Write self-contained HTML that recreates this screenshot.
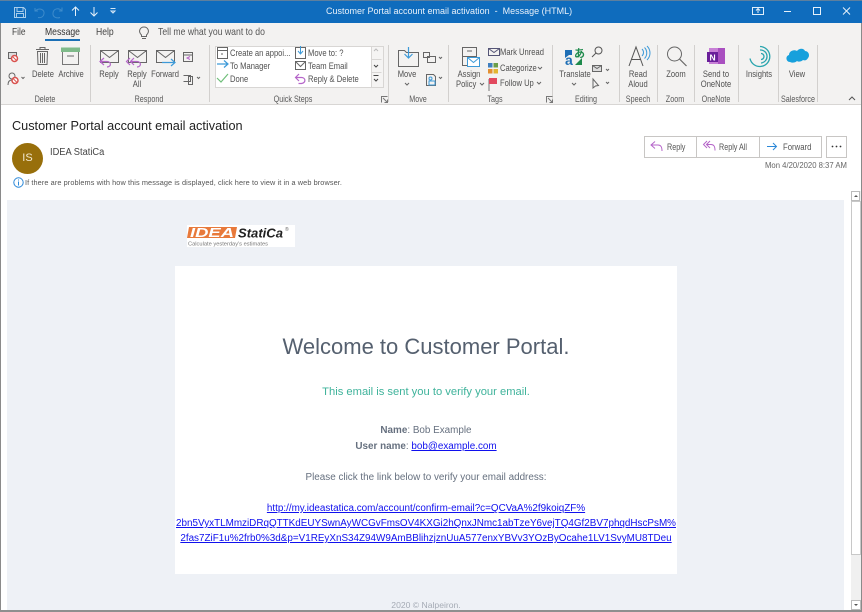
<!DOCTYPE html>
<html><head><meta charset="utf-8"><style>
html,body{margin:0;padding:0}
body{width:862px;height:612px;position:relative;overflow:hidden;background:#fff;font-family:"Liberation Sans",sans-serif;color:#444}
.a{position:absolute}
.t{position:absolute;white-space:nowrap;font-size:9.500px;line-height:11px;color:#505050;transform-origin:left center;transform:scaleX(.8)}
.c{text-align:center;transform-origin:left center;transform:scaleX(.8) translateX(-50%)}
.sep{position:absolute;top:45px;width:1px;height:57px;background:#d2d0ce}
.g{position:absolute;top:94px;white-space:nowrap;font-size:9px;line-height:11px;color:#5a5a5a;transform-origin:left center;transform:scaleX(.8) translateX(-50%)}
svg{position:absolute;overflow:visible}
.m{position:absolute;white-space:nowrap;font-family:"Liberation Sans",sans-serif;text-align:center;left:175px;width:502px;color:#66707f}
a{color:#1010ee;text-decoration:underline}
</style></head><body>
<!-- title bar -->
<div class="a" style="left:0;top:0;width:862px;height:23px;background:#0f6cbd"></div>
<div class="a" style="left:0;top:0;width:862px;height:1px;background:#5d7f9e"></div>
<svg style="left:0;top:0" width="862" height="23" fill="none" stroke="#cfe3f5" stroke-width="1">
<path d="M14.500 7.500h9l2 2v8h-11zM17 7.500v4h6v-4M16.500 17.500v-4h7v4" stroke="#a8cdeb"/>
<path d="M35 8v3h3M35.500 10.500c4-3 9-1 8.500 3s-4 4.500-6 4" stroke="#3d8bcb"/>
<path d="M62 7.500v3.500h-3M61.500 10.500c-3-3-8-2-8.500 2.500s4 5.500 7 4.500" stroke="#3d8bcb"/>
<path d="M75.500 16V7M72 10.500l3.500-3.500 3.500 3.500M94 7v9M90.500 12.500l3.500 3.500 3.500-3.500" stroke="#e6f1fa"/>
<path d="M110.500 8.500h5M111 11h4l-2 2z" stroke="#d5e7f6"/>
<path d="M752.500 7.500h11v7h-11zM758 13v-4M756 10.500l2-2 2 2" stroke="#e0eefa"/>
<path d="M784 11.500h7" stroke="#e6f1fa"/>
<rect x="813.500" y="7.500" width="7" height="7" stroke="#e6f1fa"/>
<path d="M843 7.500l7 7M850 7.500l-7 7" stroke="#e6f1fa"/>
</svg>
<div class="t" style="left:326px;top:6px;color:#e8f1fa;font-size:9px;transform:none">Customer Portal account email activation &nbsp;-&nbsp; Message (HTML)</div>
<!-- ribbon -->
<div class="a" style="left:0;top:23px;width:862px;height:82px;background:#f3f2f1"></div>
<div class="a" style="left:0;top:104px;width:862px;height:1px;background:#d8d6d4"></div>
<div class="t" style="left:12px;top:27px;font-size:10.500px;color:#444">File</div>
<div class="t" style="left:45px;top:27px;font-size:10.500px;color:#333;transform:scaleX(.82)">Message</div>
<div class="a" style="left:45px;top:39px;width:35px;height:2px;background:#1a6fb5"></div>
<div class="t" style="left:96px;top:27px;font-size:10.500px;color:#444;transform:scaleX(.82)">Help</div>
<div class="t" style="left:158px;top:27px;font-size:10.500px;color:#555;transform:scaleX(.825)">Tell me what you want to do</div>
<svg style="left:138px;top:26px" width="12" height="14" fill="none" stroke="#666"><path d="M3.500 9c-4-4-1-8 2.500-8s6.500 4 2.500 8v1.500h-5zM4 12.500h4"/></svg>
<!-- separators -->
<div class="sep" style="left:90px"></div><div class="sep" style="left:209px"></div><div class="sep" style="left:388px"></div><div class="sep" style="left:448px"></div><div class="sep" style="left:552px"></div><div class="sep" style="left:619px"></div><div class="sep" style="left:657px"></div><div class="sep" style="left:694px"></div><div class="sep" style="left:738px"></div><div class="sep" style="left:778px"></div><div class="sep" style="left:817px"></div>
<!-- delete group icons -->
<svg style="left:0;top:44px" width="90" height="50" fill="none" stroke="#666">
<rect x="8.500" y="8.500" width="8" height="6" fill="#ddd"/><circle cx="14.500" cy="14.500" r="3" fill="#fff" stroke="#d9534f" stroke-width="1.500"/><path d="M12.500 12.500l4 4" stroke="#d9534f"/>
<circle cx="12" cy="32" r="3"/><path d="M8 41c0-4 2-5 4-5"/><circle cx="15" cy="36.500" r="3" fill="#fff" stroke="#d9534f" stroke-width="1.500"/><path d="M13 34.500l4 4" stroke="#d9534f"/><path d="M21.500 33l1.500 1.500 1.500-1.500"/>
<path d="M37.500 7.500h10l-.5 13h-9zM36 5.500h13M40 5V3.500h5V5M40.500 9v10M42.500 9v10M44.500 9v10"/>
<rect x="62.500" y="7.500" width="16" height="13" stroke="#777"/><rect x="61.500" y="4" width="18" height="3.500" fill="#7fba8a" stroke="#7fba8a"/><path d="M67 12h7"/>
</svg>
<div class="t c" style="left:42.500px;top:69px">Delete</div>
<div class="t c" style="left:70.500px;top:69px">Archive</div>
<div class="g" style="left:45px">Delete</div>
<!-- respond -->
<svg style="left:90px;top:45px" width="120" height="50" fill="none" stroke="#666">
<path d="M10.500 5.500h18v12h-18zM10.500 5.500l9 7 9-7M38.500 5.500h18v12h-18zM38.500 5.500l9 7 9-7M66.500 5.500h18v12h-18zM66.500 5.500l9 7 9-7"/>
<path d="M14 13l-4 3.500 4 3.500M10 16.500h7c4 0 5 5 0 5.500" stroke="#b565c9" stroke-width="1.200"/>
<path d="M40 13l-3.500 3.500 3.500 3.500M44 13l-3.500 3.500 3.500 3.500M41 16.500h6c4 0 5 5 0 5.500" stroke="#b565c9" stroke-width="1.200"/>
<path d="M72 17.500h13M81 14l4 3.500-4 3.500" stroke="#3d9ad8" stroke-width="1.200"/>
<path d="M93.500 7.500h9v9h-9zM93.500 10h9"/><path d="M100 11.500l-3 1.500 3 1.500" stroke="#b565c9"/>
<path d="M93.500 30.500h7v6h-7M98.500 31.500h4v8h-4z"/><path d="M107 32l1.500 1.500 1.500-1.500"/>
</svg>
<div class="t c" style="left:109px;top:69px">Reply</div>
<div class="t c" style="left:136.500px;top:69px">Reply</div>
<div class="t c" style="left:136.500px;top:79px">All</div>
<div class="t c" style="left:165px;top:69px">Forward</div>
<div class="g" style="left:149px">Respond</div>
<!-- quick steps -->
<div class="a" style="left:215px;top:46px;width:167px;height:40px;background:#fff;border:1px solid #d8d6d4"></div>
<div class="a" style="left:371px;top:47px;width:11px;height:40px;background:#f5f4f3;border-left:1px solid #d8d6d4"></div>
<svg style="left:210px;top:44px" width="175" height="46" fill="none" stroke="#666">
<path d="M7.500 3.500h10v11h-10zM7.500 6.500h10"/><path d="M11 10h2"/>
<path d="M7 20h11M14 16.500l4 3.500-4 3.500" stroke="#3d9ad8" stroke-width="1.200"/>
<path d="M7 34l4 4 7-8" stroke="#6fbf7a" stroke-width="1.200"/>
<path d="M85.500 3.500h10v11h-10z"/><path d="M90.500 2v8M88 7l2.500 3 2.500-3" stroke="#3d9ad8"/>
<path d="M85.500 17.500h10v8h-10zM85.500 17.500l5 5 5-5"/>
<path d="M89 30l-3.500 3.500 3.500 3.500M85.500 33.500h6c4 0 5 5 0 6h-3" stroke="#b565c9" stroke-width="1.200"/>
<path d="M164 7l2-2 2 2" stroke="#bbb"/><path d="M164 21l2 2 2-2" stroke="#444"/><path d="M163.500 31.500h5M164 35l2 2 2-2" stroke="#444"/>
<path d="M161.500 15.500h10M161.500 28.500h10" stroke="#d8d6d4"/>
</svg>
<div class="t" style="left:230px;top:48px">Create an appoi...</div>
<div class="t" style="left:230px;top:61px">To Manager</div>
<div class="t" style="left:230px;top:74px">Done</div>
<div class="t" style="left:308px;top:48px">Move to: ?</div>
<div class="t" style="left:308px;top:61px">Team Email</div>
<div class="t" style="left:308px;top:74px">Reply &amp; Delete</div>
<div class="g" style="left:293px">Quick Steps</div>
<svg style="left:380px;top:95px" width="9" height="9" fill="none" stroke="#777"><path d="M1.500 7.500v-6h6M3 3l4 4M7.500 4.500v3h-3"/></svg>
<!-- move -->
<svg style="left:388px;top:44px" width="60" height="50" fill="none" stroke="#666">
<path d="M10.500 6.500h6l2 2h12v14h-20z"/><path d="M20.500 3v11M16.500 10l4 4 4-4" stroke="#3d9ad8" stroke-width="1.200"/>
<path d="M35.500 8.500h6v5h-6zM39.500 12.500h8v6h-8zM51 13l1.500 1.500 1.500-1.500"/>
<path d="M38.500 30.500h7l2 2v9h-9z"/><path d="M41 37h6v4h-6z" stroke="#3d9ad8"/><circle cx="42.500" cy="34.500" r="1.500" stroke="#3d9ad8"/><path d="M51 33l1.500 1.500 1.500-1.500"/>
</svg>
<div class="t c" style="left:407px;top:69px">Move</div>
<svg style="left:404px;top:81px" width="6" height="6" fill="none" stroke="#666"><path d="M1 2l2 2 2-2"/></svg>
<div class="g" style="left:418px">Move</div>
<!-- tags -->
<svg style="left:448px;top:44px" width="105" height="50" fill="none" stroke="#666">
<path d="M14.500 3.500h14v9h-14zM14.500 12.500h14v9h-14zM19 7h5"/><rect x="19.500" y="13.500" width="12" height="9" fill="#fff" stroke="#3d9ad8"/><path d="M19.500 13.500l6 5 6-5" stroke="#3d9ad8"/>
<path d="M40.500 4.500h11v7h-11zM40.500 4.500l5.500 4 5.500-4" stroke="#557"/>
<rect x="40" y="19" width="4.500" height="4.500" fill="#3f7fbf" stroke="none"/><rect x="45.500" y="19" width="4.500" height="4.500" fill="#6b9e4a" stroke="none"/><rect x="40" y="25" width="4.500" height="4.500" fill="#e39032" stroke="none"/><rect x="45.500" y="25" width="4.500" height="4.500" fill="#e3b532" stroke="none"/>
<path d="M41 35v12" stroke="#777"/><path d="M41.500 34.500h7v5h-7z" fill="#e2495e" stroke="#e2495e"/>
</svg>
<div class="t c" style="left:469px;top:69px">Assign</div>
<div class="t" style="left:456px;top:79px">Policy</div>
<svg style="left:479px;top:81px" width="6" height="6" fill="none" stroke="#666"><path d="M1 2l2 2 2-2"/></svg>
<div class="t" style="left:500px;top:47px">Mark Unread</div>
<div class="t" style="left:500px;top:63px">Categorize</div>
<svg style="left:537px;top:65px" width="6" height="6" fill="none" stroke="#666"><path d="M1 2l2 2 2-2"/></svg>
<div class="t" style="left:500px;top:78px">Follow Up</div>
<svg style="left:536px;top:80px" width="6" height="6" fill="none" stroke="#666"><path d="M1 2l2 2 2-2"/></svg>
<div class="g" style="left:495px">Tags</div>
<svg style="left:545px;top:95px" width="9" height="9" fill="none" stroke="#777"><path d="M1.500 7.500v-6h6M3 3l4 4M7.500 4.500v3h-3"/></svg>
<!-- editing -->
<svg style="left:552px;top:44px" width="68" height="50" fill="none" stroke="#666">
<path d="M13 6h7v5l-3 0-4 3z" fill="#1f6fb5" stroke="none"/>
<text x="13" y="21" font-family="Liberation Sans" font-size="14" font-weight="bold" fill="#1f6fb5" stroke="none">a</text>
<text x="22" y="13" font-family="Noto Sans CJK JP" font-size="11" font-weight="bold" fill="#1e8a4c" stroke="none">あ</text>
<path d="M23 21l7-7v7z" fill="#1e8a4c" stroke="none"/>
<circle cx="46.500" cy="6.500" r="3.500" stroke="#555"/><path d="M44 9l-4 4" stroke="#555"/>
<path d="M40.500 21.500h9v6h-9z" fill="#ddd"/><path d="M40.500 21.500l4.500 3 4.500-3M54 25l1.500 1.500 1.500-1.500"/>
<path d="M41 35v9l2.500-2 3-0.500zM54 38l1.500 1.500 1.500-1.500"/>
</svg>
<div class="t c" style="left:575px;top:69px">Translate</div>
<svg style="left:571px;top:81px" width="6" height="6" fill="none" stroke="#666"><path d="M1 2l2 2 2-2"/></svg>
<div class="g" style="left:586px">Editing</div>
<!-- speech -->
<svg style="left:619px;top:44px" width="38" height="26" fill="none" stroke="#555">
<path d="M10 22L17 3l7 19M12.500 15.500h9"/><path d="M23 5c2 2 2 5 0 7M25.500 3.500c3 3 3 8 0 11M28 2c4 4 4 10 0 14" stroke="#3d9ad8"/>
</svg>
<div class="t c" style="left:638px;top:69px">Read</div>
<div class="t c" style="left:638px;top:79px">Aloud</div>
<div class="g" style="left:638px">Speech</div>
<!-- zoom -->
<svg style="left:657px;top:44px" width="38" height="26" fill="none" stroke="#666">
<circle cx="17.500" cy="10" r="7"/><path d="M22.500 15l7 7" stroke-width="1.200"/>
</svg>
<div class="t c" style="left:676px;top:69px">Zoom</div>
<div class="g" style="left:675px">Zoom</div>
<!-- onenote -->
<svg style="left:700px;top:47px" width="30" height="20">
<rect x="9" y="1" width="16" height="16" fill="#c77fd6"/><rect x="18" y="1" width="7" height="16" fill="#a94fc0"/><rect x="7" y="5" width="11" height="10" fill="#6a1f9a"/>
<text x="9.500" y="13.500" font-family="Liberation Sans" font-size="8.500" font-weight="bold" fill="#fff">N</text>
</svg>
<div class="t c" style="left:716px;top:69px">Send to</div>
<div class="t c" style="left:716px;top:79px">OneNote</div>
<div class="g" style="left:716px">OneNote</div>
<!-- insights -->
<svg style="left:748px;top:45px" width="24" height="24" fill="none" stroke="#2aa5ae">
<path d="M12 1.500a10 10 0 1 1-10 12" stroke-width="1.300"/><path d="M12 5a6.500 6.500 0 0 1 1 13" stroke-width="1.300"/><path d="M13 8.500a3 3 0 0 1 0 6" stroke-width="1.300"/>
</svg>
<div class="t c" style="left:759px;top:69px">Insights</div>
<!-- salesforce -->
<svg style="left:786px;top:47px" width="24" height="18"><path d="M4 15c-4 0-5-6-1-7 0-4 5-6 8-4 2-3 7-3 8 0 4 0 5 5 3 7-1 2-3 3-5 2-2 2-5 2-6 1-2 2-5 2-7 1z" fill="#17a0dc"/></svg>
<div class="t c" style="left:797px;top:69px">View</div>
<div class="g" style="left:798px">Salesforce</div>
<svg style="left:848px;top:96px" width="8" height="6" fill="none" stroke="#555"><path d="M1 4l3-3 3 3"/></svg>
<!-- header -->
<div class="t" style="left:12px;top:119px;font-size:12.700px;line-height:15px;color:#222;transform:none">Customer Portal account email activation</div>
<div class="a" style="left:12px;top:143px;width:31px;height:31px;border-radius:50%;background:#986f0b;color:#f2e8d0;font-size:11px;line-height:31px;text-align:center">IS</div>
<div class="t" style="left:50px;top:147px;font-size:10px;line-height:12px;color:#444;transform:scaleX(.93)">IDEA StatiCa</div>
<svg style="left:13px;top:177px" width="11" height="11" fill="none" stroke="#2b88d8"><circle cx="5.500" cy="5.500" r="4.700"/><path d="M5.500 4.500v4M5.500 2.500v1"/></svg>
<div class="t" style="left:25px;top:178px;font-size:7.600px;line-height:10px;color:#555;letter-spacing:.1px;transform:scaleX(.963)">If there are problems with how this message is displayed, click here to view it in a web browser.</div>
<!-- reply buttons -->
<div class="a" style="left:644px;top:136px;width:176px;height:20px;border:1px solid #c8c6c4;background:#fff"></div>
<div class="a" style="left:696px;top:136px;width:1px;height:21px;background:#c8c6c4"></div>
<div class="a" style="left:759px;top:136px;width:1px;height:21px;background:#c8c6c4"></div>
<div class="a" style="left:826px;top:136px;width:19px;height:20px;border:1px solid #c8c6c4;background:#fff"></div>
<svg style="left:640px;top:136px" width="210" height="22" fill="none">
<path d="M15 5.500l-4 3.500 4 3.500M11 9h7c3 0 4 2 4 6" stroke="#b565c9"/>
<path d="M67 5l-3.500 3.500 3.500 3.500M70 5l-3.500 3.500 3.500 3.500M67 8.500h4c3 0 4 2 4 6" stroke="#b565c9"/>
<path d="M127 10.500h9M133 7l3.500 3.500-3.500 3.500" stroke="#2b88d8"/>
<circle cx="192.500" cy="10.500" r=".9" fill="#333"/><circle cx="196.500" cy="10.500" r=".9" fill="#333"/><circle cx="200.500" cy="10.500" r=".9" fill="#333"/>
</svg>
<div class="t" style="left:667px;top:142px;font-size:9px;color:#555">Reply</div>
<div class="t" style="left:719px;top:142px;font-size:9px;color:#555">Reply All</div>
<div class="t" style="left:783px;top:142px;font-size:9px;color:#555;transform:scaleX(.86)">Forward</div>
<div class="t" style="left:765px;top:160px;font-size:8.300px;color:#666;transform:scaleX(.93)">Mon 4/20/2020 8:37 AM</div>
<!-- message -->
<div class="a" style="left:7px;top:200px;width:837px;height:412px;background:#eef1f6"></div>
<div class="a" style="left:187px;top:225px;width:108px;height:22px;background:#fff"></div>
<svg style="left:187px;top:225px" width="108" height="22">
<path d="M2 2h48l-2 11H0z" fill="#e8793a"/>
<text x="3" y="12" font-family="Liberation Sans" font-size="12.500" font-weight="bold" font-style="italic" fill="#fff" textLength="44" lengthAdjust="spacingAndGlyphs">IDEA</text>
<text x="51" y="12.500" font-family="Liberation Sans" font-size="13" font-weight="bold" font-style="italic" fill="#222" textLength="45" lengthAdjust="spacingAndGlyphs">StatiCa</text>
<text x="98" y="6" font-size="5" font-family="Liberation Sans" fill="#666">®</text>
<text x="1" y="20.500" font-size="5" font-family="Liberation Sans" fill="#777" textLength="80" lengthAdjust="spacingAndGlyphs">Calculate yesterday's estimates</text>
</svg>
<div class="a" style="left:175px;top:266px;width:502px;height:308px;background:#fff"></div>
<div class="m" style="top:333px;font-size:22px;line-height:28px;color:#55606f">Welcome to Customer Portal.</div>
<div class="m" style="top:385px;font-size:11.200px;line-height:15px;color:#3fb39b">This email is sent you to verify your email.</div>
<div class="m" style="top:424px;font-size:9.900px;line-height:14px"><b>Name</b>: Bob Example</div>
<div class="m" style="top:440px;font-size:9.900px;line-height:14px"><b>User name</b>: <a>bob@example.com</a></div>
<div class="m" style="top:471px;font-size:9.900px;line-height:14px">Please click the link below to verify your email address:</div>
<div class="m" style="top:501px;font-size:9.900px;line-height:15px"><a>http://my.ideastatica.com/account/confirm-email?c=QCVaA%2f9koiqZF%</a></div>
<div class="m" style="top:516px;font-size:9.900px;line-height:15px"><a>2bn5VyxTLMmziDRqQTTKdEUYSwnAyWCGvFmsOV4KXGi2hQnxJNmc1abTzeY6vejTQ4Gf2BV7phqdHscPsM%</a></div>
<div class="m" style="top:531px;font-size:9.900px;line-height:15px"><a>2fas7ZiF1u%2frb0%3d&amp;p=V1REyXnS34Z94W9AmBBlihzjznUuA577enxYBVv3YOzByOcahe1LV1SvyMU8TDeu</a></div>
<div class="m" style="top:599px;font-size:8.600px;line-height:12px;color:#a5abb5">2020 © Nalpeiron.</div>
<!-- scrollbar -->
<div class="a" style="left:851px;top:191px;width:10px;height:419px;background:#f0f0f0"></div>
<div class="a" style="left:851px;top:191px;width:9px;height:10px;background:#fff;border:1px solid #bbb;box-sizing:border-box"></div>
<div class="a" style="left:851px;top:201px;width:10px;height:354px;background:#fff;border:1px solid #c8c8c8;box-sizing:border-box"></div>
<div class="a" style="left:851px;top:600px;width:10px;height:10px;background:#fff;border:1px solid #bbb;box-sizing:border-box"></div>
<svg style="left:851px;top:191px" width="10" height="419"><path d="M3 6l2-2 2 2zM3 413h4l-2 2z" fill="#555"/></svg>
<!-- window frame -->
<div class="a" style="left:0;top:23px;width:1px;height:589px;background:#8a8a8a"></div>
<div class="a" style="right:0;top:23px;width:1px;height:589px;background:#8a8a8a"></div>
<div class="a" style="left:0;top:610px;width:862px;height:2px;background:#8f8f8f"></div>
</body></html>
